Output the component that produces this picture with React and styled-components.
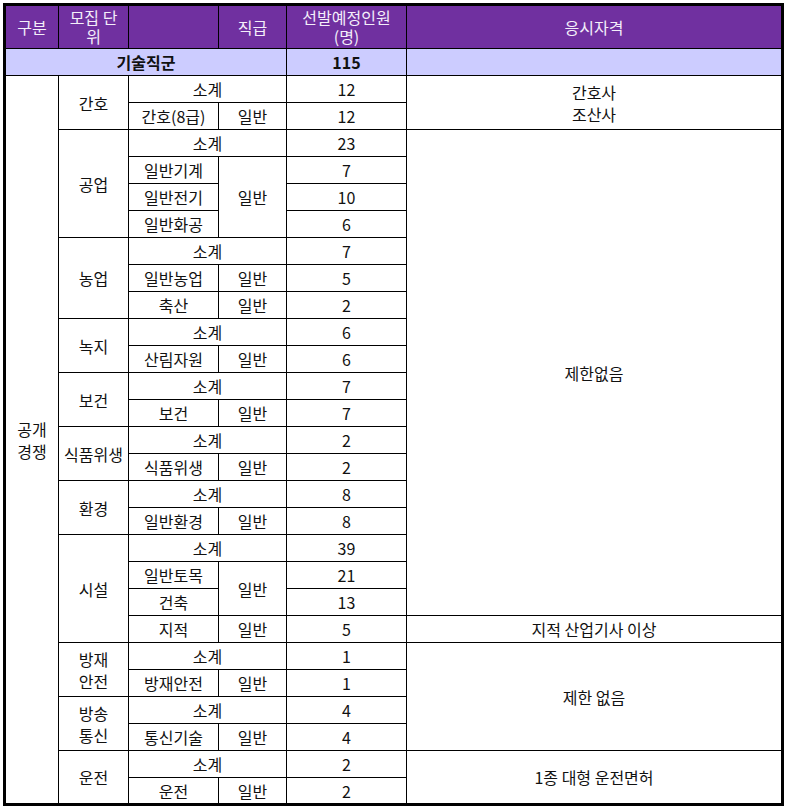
import React from "react";
import styled, { createGlobalStyle } from "styled-components";

const GlobalStyle = createGlobalStyle`
  body {
    margin: 0;
    padding: 3px;
    background: #ffffff;
    font-family: "Noto Sans CJK KR", "Noto Sans", sans-serif;
  }
`;

const Table = styled.table`
  border-collapse: collapse;
  table-layout: fixed;
  width: 781px;
  border: 3px solid #000;
  font-size: 16px;
  color: #111;
`;

const HeadRow = styled.tr`
  height: 44px;
`;

const Row = styled.tr`
  height: 27px;
`;

const HeadCell = styled.th`
  background: #7030a0;
  color: #f4eefa;
  font-weight: 400;
  border: 1px solid #000;
  padding: 0 2px;
  line-height: 19px;
  text-align: center;
  white-space: pre-line;
`;

const Cell = styled.td`
  border: 1px solid #000;
  padding: 0;
  line-height: 22px;
  text-align: center;
  vertical-align: middle;
  white-space: pre-line;
  background: ${(p) => (p.$sub ? "#ccccff" : "#fff")};
  font-weight: ${(p) => (p.$bold ? 700 : 400)};
`;

const groups = [
  {
    name: "간호",
    total: 12,
    rows: [{ unit: "간호(8급)", grade: "일반", n: 12 }],
    qual: { text: "간호사\n조산사", span: 2 },
  },
  {
    name: "공업",
    total: 23,
    rows: [
      { unit: "일반기계", grade: "일반", gradeSpan: 3, n: 7 },
      { unit: "일반전기", n: 10 },
      { unit: "일반화공", n: 6 },
    ],
    qual: { text: "제한없음", span: 18 },
  },
  {
    name: "농업",
    total: 7,
    rows: [
      { unit: "일반농업", grade: "일반", n: 5 },
      { unit: "축산", grade: "일반", n: 2 },
    ],
  },
  { name: "녹지", total: 6, rows: [{ unit: "산림자원", grade: "일반", n: 6 }] },
  { name: "보건", total: 7, rows: [{ unit: "보건", grade: "일반", n: 7 }] },
  { name: "식품위생", total: 2, rows: [{ unit: "식품위생", grade: "일반", n: 2 }] },
  { name: "환경", total: 8, rows: [{ unit: "일반환경", grade: "일반", n: 8 }] },
  {
    name: "시설",
    total: 39,
    rows: [
      { unit: "일반토목", grade: "일반", gradeSpan: 2, n: 21 },
      { unit: "건축", n: 13 },
      { unit: "지적", grade: "일반", n: 5, qual: "지적 산업기사 이상" },
    ],
  },
  {
    name: "방재\n안전",
    total: 1,
    rows: [{ unit: "방재안전", grade: "일반", n: 1 }],
    qual: { text: "제한 없음", span: 4 },
  },
  { name: "방송\n통신", total: 4, rows: [{ unit: "통신기술", grade: "일반", n: 4 }] },
  {
    name: "운전",
    total: 2,
    rows: [{ unit: "운전", grade: "일반", n: 2 }],
    qual: { text: "1종 대형 운전면허", span: 2 },
  },
];

const bodyRows = groups.reduce((sum, g) => sum + g.rows.length + 1, 0);

const App = () => {
  return (
    <React.Fragment>
      <GlobalStyle />
      <Table>
        <colgroup>
          <col style={{ width: 54 }} />
          <col style={{ width: 70 }} />
          <col style={{ width: 90 }} />
          <col style={{ width: 68 }} />
          <col style={{ width: 120 }} />
          <col />
        </colgroup>
        <thead>
          <HeadRow>
            <HeadCell>구분</HeadCell>
            <HeadCell>{"모집 단\n위"}</HeadCell>
            <HeadCell />
            <HeadCell>직급</HeadCell>
            <HeadCell>{"선발예정인원\n(명)"}</HeadCell>
            <HeadCell>응시자격</HeadCell>
          </HeadRow>
        </thead>
        <tbody>
          <Row>
            <Cell $sub $bold colSpan={4}>
              기술직군
            </Cell>
            <Cell $sub $bold>
              115
            </Cell>
            <Cell $sub />
          </Row>
          {groups.map((g, gi) => (
            <React.Fragment key={g.name}>
              <Row>
                {gi === 0 && <Cell rowSpan={bodyRows}>{"공개\n경쟁"}</Cell>}
                <Cell rowSpan={g.rows.length + 1}>{g.name}</Cell>
                <Cell colSpan={2}>소계</Cell>
                <Cell>{g.total}</Cell>
                {g.qual && <Cell rowSpan={g.qual.span}>{g.qual.text}</Cell>}
              </Row>
              {g.rows.map((r) => (
                <Row key={r.unit}>
                  <Cell>{r.unit}</Cell>
                  {r.grade && <Cell rowSpan={r.gradeSpan || 1}>{r.grade}</Cell>}
                  <Cell>{r.n}</Cell>
                  {r.qual && <Cell>{r.qual}</Cell>}
                </Row>
              ))}
            </React.Fragment>
          ))}
        </tbody>
      </Table>
    </React.Fragment>
  );
};

export default App;
